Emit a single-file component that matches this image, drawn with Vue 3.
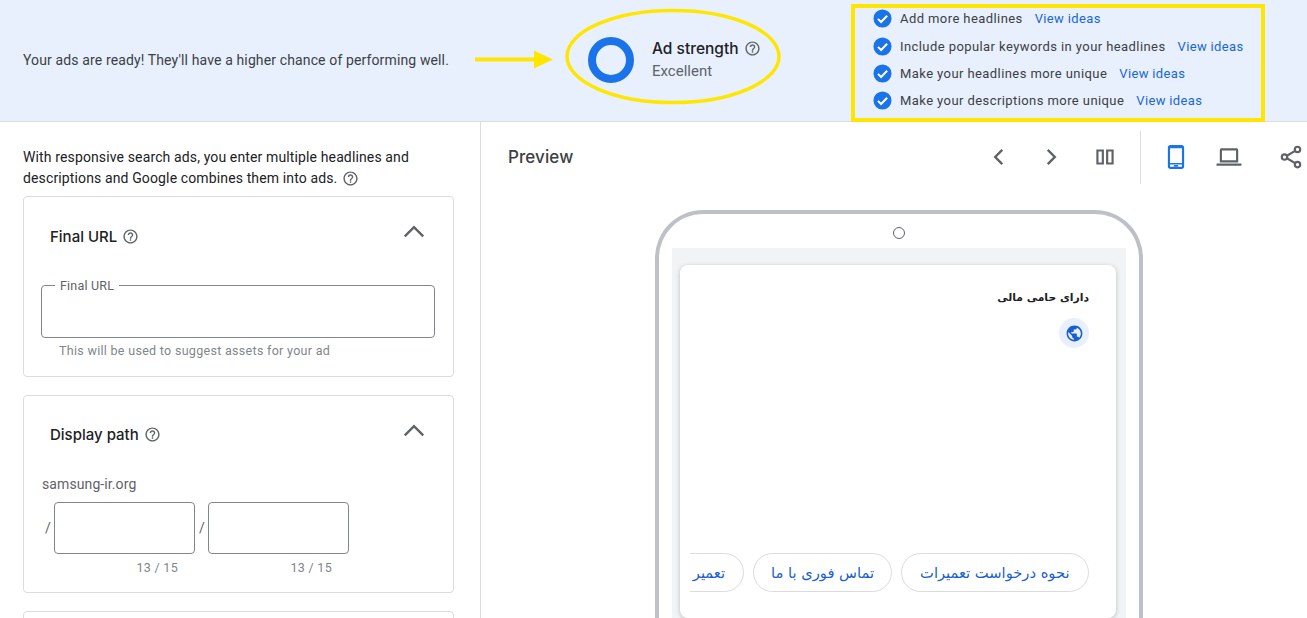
<script setup>
const tips = [
  'Add more headlines',
  'Include popular keywords in your headlines',
  'Make your headlines more unique',
  'Make your descriptions more unique',
]
const paths = [0, 1]
const help = 'M11 18h2v-2h-2v2zm1-16C6.48 2 2 6.48 2 12s4.48 10 10 10 10-4.48 10-10S17.52 2 12 2zm0 18c-4.41 0-8-3.59-8-8s3.59-8 8-8 8 3.59 8 8-3.59 8-8 8zm0-14c-2.21 0-4 1.79-4 4h2c0-1.1.9-2 2-2s2 .9 2 2c0 2-3 1.75-3 5h2c0-2.25 3-2.5 3-5 0-2.21-1.79-4-4-4z'
</script>

<template>
  <div class="page">
    <header class="banner">
      <p class="message">Your ads are ready! They'll have a higher chance of performing well.</p>
      <div class="strength">
        <div class="ring"></div>
        <div class="strength-text">
          <div class="strength-title">
            <span>Ad strength</span>
            <svg class="help" viewBox="0 0 24 24"><path :d="help" /></svg>
          </div>
          <div class="strength-value">Excellent</div>
        </div>
      </div>
      <ul class="tips">
        <li v-for="tip in tips" :key="tip" class="tip">
          <svg class="check" viewBox="0 0 20 20">
            <circle cx="10" cy="10" r="9.5" fill="#1a73e8" />
            <path d="M5.2 10.4l3.3 3.3 6.4-6.6" fill="none" stroke="#fff" stroke-width="2.1" />
          </svg>
          <span class="tip-text">{{ tip }}</span>
          <a class="tip-link">View ideas</a>
        </li>
      </ul>
    </header>

    <main class="body">
      <section class="left">
        <p class="intro">
          With responsive search ads, you enter multiple headlines and descriptions and Google combines them into ads.
          <svg class="help inline" viewBox="0 0 24 24"><path :d="help" /></svg>
        </p>

        <div class="card card-url">
          <div class="card-head">
            <h2>Final URL</h2>
            <svg class="help" viewBox="0 0 24 24"><path :d="help" /></svg>
            <svg class="chev" viewBox="0 0 24 24"><path d="M3.5 16L12 7.500l8.500 8.500" /></svg>
          </div>
          <fieldset class="url-field">
            <legend>Final URL</legend>
          </fieldset>
          <div class="hint">This will be used to suggest assets for your ad</div>
        </div>

        <div class="card card-path">
          <div class="card-head">
            <h2>Display path</h2>
            <svg class="help" viewBox="0 0 24 24"><path :d="help" /></svg>
            <svg class="chev" viewBox="0 0 24 24"><path d="M3.5 16L12 7.500l8.500 8.500" /></svg>
          </div>
          <div class="domain">samsung-ir.org</div>
          <div class="path-row">
            <div v-for="p in paths" :key="p" class="path-item">
              <div class="path-input">
                <span class="slash">/</span>
                <div class="box"></div>
              </div>
              <div class="count">13 / 15</div>
            </div>
          </div>
        </div>

        <div class="card card-next"></div>
      </section>

      <section class="right">
        <div class="toolbar">
          <h1>Preview</h1>
          <div class="tools">
            <svg class="tool t-prev" viewBox="0 0 24 24"><path d="M15 5.5L8.5 12l6.5 6.5" fill="none" stroke="#5f6368" stroke-width="2.2" /></svg>
            <svg class="tool t-next" viewBox="0 0 24 24"><path d="M9 5.5l6.5 6.5L9 18.5" fill="none" stroke="#5f6368" stroke-width="2.2" /></svg>
            <svg class="tool t-cols" viewBox="0 0 24 24"><path d="M4 5h7v14H4zM13 5h7v14h-7z M6 7v10h3V7zM15 7v10h3V7z" fill="#5f6368" fill-rule="evenodd" /></svg>
            <div class="divider"></div>
            <svg class="tool t-phone" viewBox="0 0 24 24"><path d="M7 1h10a2.500 2.500 0 0 1 2.500 2.500v17A2.500 2.500 0 0 1 17 23H7a2.500 2.500 0 0 1-2.500-2.500v-17A2.500 2.500 0 0 1 7 1zM6.500 4v13.500h11V4zM6.500 19v2h11v-2zM10 19.300h4v1.400h-4z" fill="#1a73e8" fill-rule="evenodd" /></svg>
            <svg class="tool t-laptop" viewBox="0 0 24 24"><path d="M3.500 17V5.500A1.500 1.500 0 0 1 5 4h14a1.500 1.500 0 0 1 1.500 1.500V17zM5.500 6v9h13V6zM.5 18h23v2H.5z" fill="#5f6368" fill-rule="evenodd" /></svg>
            <svg class="tool t-share" viewBox="0 0 24 24"><g fill="none" stroke="#5f6368" stroke-width="2"><circle cx="18" cy="5" r="2.500" /><circle cx="6" cy="12" r="2.500" /><circle cx="18" cy="19" r="2.500" /><path d="M8.200 10.800l7.600-4.500M8.200 13.200l7.600 4.500" /></g></svg>
          </div>
        </div>

        <div class="phone">
          <div class="camera"></div>
          <div class="screen">
            <div class="ad">
              <div class="sponsor" dir="rtl">دارای حامی مالی</div>
              <div class="globe-wrap">
                <svg class="globe" viewBox="0 0 24 24"><path d="M12 2C6.480 2 2 6.480 2 12s4.480 10 10 10 10-4.480 10-10S17.520 2 12 2zm-1 17.930c-3.950-.49-7-3.850-7-7.930 0-.62.080-1.210.210-1.790L9 15v1c0 1.100.9 2 2 2v1.930zm6.900-2.540c-.26-.81-1-1.390-1.900-1.390h-1v-3c0-.55-.45-1-1-1H8v-2h2c.55 0 1-.45 1-1V7h2c1.100 0 2-.9 2-2v-.41c2.930 1.190 5 4.060 5 7.410 0 2.080-.8 3.970-2.100 5.390z" /></svg>
              </div>
              <div class="chips" dir="rtl">
                <span class="chip">نحوه درخواست تعمیرات</span>
                <span class="chip">تماس فوری با ما</span>
                <span class="chip chip-cut">تعمیر</span>
              </div>
            </div>
          </div>
        </div>
      </section>
    </main>

    <svg class="marks" width="1307" height="125" viewBox="0 0 1307 125">
      <path d="M475 59.500h60" stroke="#ffe600" stroke-width="4" fill="none" />
      <path d="M534 50.500l19 9-19 9z" fill="#ffe600" />
      <ellipse cx="673" cy="56.500" rx="106" ry="46" fill="none" stroke="#ffe600" stroke-width="3.500" />
      <rect x="853" y="6" width="410" height="114" fill="none" stroke="#ffe600" stroke-width="4" />
    </svg>
  </div>
</template>

<style>
html, body { margin: 0; overflow: hidden; background: #fff; }
</style>

<style scoped>
.page {
  position: relative;
  width: 1307px;
  height: 618px;
  overflow: hidden;
  display: flex;
  flex-direction: column;
  font-family: Roboto, "Liberation Sans", sans-serif;
  color: #202124;
}
.marks { position: absolute; left: 0; top: 0; pointer-events: none; }

.banner {
  flex: none;
  box-sizing: border-box;
  padding-left: 23px;
  background: #e8f0fe;
  border-bottom: 1px solid #dadce0;
  display: grid;
  grid-template-columns: 565px 285px 1fr;
  align-items: center;
  height: 122px;
}
.message { margin: 0 0 2px; font-size: 14px; line-height: 20px; color: #3c4043; letter-spacing: 0.13px; }
.strength { display: flex; align-items: center; gap: 18px; margin-top: -1px; }
.ring {
  width: 46px; height: 46px; box-sizing: border-box;
  border: 8px solid #1a73e8; border-radius: 50%;
}
.strength-text { display: flex; flex-direction: column; gap: 1px; margin-top: -2px; }
.strength-title { display: flex; align-items: center; gap: 5px; font-family: Inter, Roboto, sans-serif; font-size: 15.500px; font-weight: 500; line-height: 22px; color: #202124; }
.strength-value { font-size: 15px; line-height: 20px; color: #5f6368; }
.help { width: 17px; height: 17px; fill: #5f6368; flex: none; }
.help.inline { vertical-align: -4px; margin-left: 1px; }

.tips { list-style: none; margin: 0; padding: 0.4px 0 1.6px 0; }
.tip { display: flex; align-items: center; height: 27.300px; font-size: 13px; letter-spacing: 0.42px; }
.check { width: 19px; height: 19px; flex: none; margin-right: 8px; }
.tip-text { color: #3c4043; }
.tip-link { color: #1967d2; margin-left: 12px; letter-spacing: 0.35px; }

.body { flex: 1; display: flex; min-height: 0; }
.left {
  width: 481px; flex: none; box-sizing: border-box;
  padding: 25px 26px 0 23px;
  border-right: 1px solid #dadce0;
}
.intro { margin: 0 0 7px; font-size: 14px; line-height: 21px; color: #202124; letter-spacing: 0.13px; }
.card {
  box-sizing: border-box;
  border: 1px solid #dadce0;
  border-radius: 4px;
  margin-bottom: 18px;
  padding: 0 17px;
}
.card-url { height: 181px; }
.card-path { height: 198px; }
.card-next { height: 60px; }
.card-head {
  display: flex; align-items: center; gap: 5px;
  height: 76px; padding-left: 9px; margin-bottom: 2px;
}
.card-head h2 { margin: 0; font-family: Inter, Roboto, sans-serif; font-size: 15px; font-weight: 500; color: #202124; }
.chev {
  width: 26px; height: 26px; margin-left: auto; margin-right: 9px; margin-top: -6px;
  fill: none; stroke: #5f6368; stroke-width: 2.200;
}
.card-url .card-head { height: 79px; margin-bottom: 0; }
.card-url .chev { margin-top: -10px; }
.url-field {
  margin: 0; padding: 0 0 0 13px; box-sizing: border-box;
  height: 62px; width: 394px;
  border: 1px solid #80868b; border-radius: 4px;
}
.url-field legend { padding: 2px 5px 0; font-size: 12.500px; line-height: 16px; color: #5f6368; letter-spacing: 0.2px; }
.hint { margin: 5px 0 0 18px; font-size: 12.500px; line-height: 16px; color: #80868b; letter-spacing: 0.3px; }

.domain { font-size: 14px; line-height: 20px; color: #5f6368; margin-left: 1px; letter-spacing: 0.1px; }
.path-row { display: flex; margin-top: 8px; margin-left: 4px; gap: 3px; }
.path-item { width: 151px; }
.path-input { display: flex; align-items: center; gap: 4px; }
.slash { font-size: 14px; color: #5f6368; width: 5px; }
.box { width: 141px; height: 52px; box-sizing: border-box; border: 1px solid #80868b; border-radius: 4px; }
.count { font-size: 12.500px; line-height: 16px; color: #80868b; text-align: right; padding-right: 18px; margin-top: 6px; letter-spacing: 0.3px; }

.right { flex: 1; min-width: 0; padding-left: 27px; display: flex; flex-direction: column; }
.toolbar { display: flex; align-items: center; height: 70px; flex: none; }
.toolbar h1 { margin: 0; font-family: Inter, Roboto, sans-serif; font-size: 17px; font-weight: 500; color: #3c4043; letter-spacing: 0.1px; }
.tools { margin-left: auto; display: flex; align-items: center; height: 54px; }
.tool { width: 26px; height: 26px; flex: none; }
.t-prev { margin-right: 26px; }
.t-next { margin-right: 28px; }
.t-cols { margin-right: 22px; }
.divider { width: 1px; height: 53px; background: #dadce0; margin-right: 22px; }
.t-phone { margin-right: 27px; }
.t-laptop { margin-right: 36px; }
.t-share { margin-right: 3px; }

.phone {
  box-sizing: border-box;
  width: 488px;
  height: 520px;
  margin-left: 147px;
  margin-top: 18px;
  flex: none;
  border: 4px solid #bdc1c6;
  border-bottom: 0;
  border-radius: 48px 48px 0 0;
  padding: 34px 13px 0;
  position: relative;
}
.camera {
  position: absolute; left: 234px; top: 13px;
  width: 12px; height: 12px; box-sizing: border-box;
  border: 1px solid #5f6368; border-radius: 50%;
}
.screen { background: #f1f3f4; height: 100%; padding: 17px 10px 0 8px; box-sizing: border-box; }
.ad {
  background: #fff;
  height: 353px;
  border-radius: 8px;
  box-shadow: 0 1px 4px rgba(60, 64, 67, .3);
  box-sizing: border-box;
  padding: 24px 27px 0 10px;
  display: flex;
  flex-direction: column;
}
.sponsor { font-family: "DejaVu Sans", "Noto Sans", sans-serif; font-size: 10.800px; line-height: 18px; font-weight: 700; color: #202124; }
.globe-wrap {
  align-self: flex-end;
  width: 30px; height: 30px; border-radius: 50%; background: #e8f0fe;
  display: flex; align-items: center; justify-content: center;
  margin-top: 11px;
}
.globe { width: 19px; height: 19px; fill: #1a5fd0; }
.chips { display: flex; gap: 8.500px; margin-top: 205px; overflow: hidden; }
.chip {
  flex: none; height: 39px; box-sizing: border-box; padding: 0 18.500px;
  display: flex; align-items: center;
  border: 1px solid #dadce0; border-radius: 20px;
  font-family: "DejaVu Sans", "Noto Sans", sans-serif;
  font-size: 14.700px; color: #1a5fd0; background: #fff;
}
.chip:nth-child(2) { padding: 0 17px; }
.chip-cut { padding-left: 40px; }
</style>
